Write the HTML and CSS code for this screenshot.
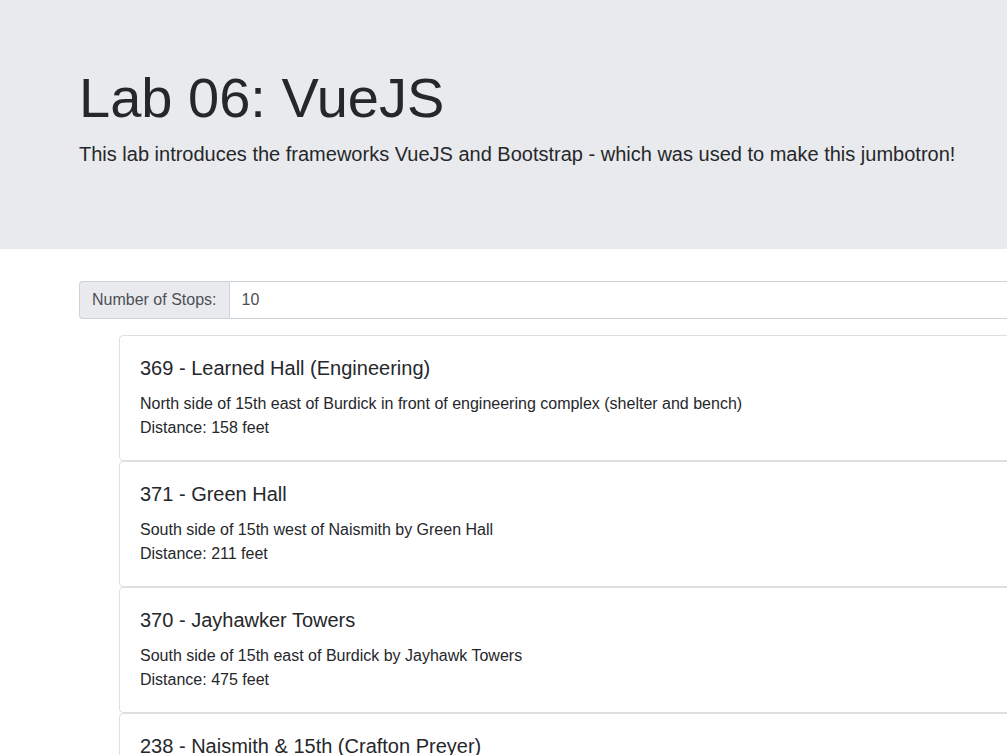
FILE: index.html
```html
<!DOCTYPE html>
<html lang="en">
<head>
<meta charset="utf-8">
<title>Lab 06: VueJS</title>
<link rel="stylesheet" href="styles.css">
</head>
<body>
<header class="jumbotron">
  <h1 class="display">Lab 06: VueJS</h1>
  <p class="lead">This lab introduces the frameworks VueJS and Bootstrap - which was used to make this jumbotron!</p>
</header>
<main class="content">
  <div class="input-group">
    <label class="input-label" for="stops">Number of Stops:</label>
    <input class="input-field" id="stops" type="text" value="10">
  </div>
  <ul class="stops">
    <li class="card">
      <h5 class="card-title">369 - Learned Hall (Engineering)</h5>
      <p class="card-text">North side of 15th east of Burdick in front of engineering complex (shelter and bench)<br>Distance: 158 feet</p>
    </li>
    <li class="card">
      <h5 class="card-title">371 - Green Hall</h5>
      <p class="card-text">South side of 15th west of Naismith by Green Hall<br>Distance: 211 feet</p>
    </li>
    <li class="card">
      <h5 class="card-title">370 - Jayhawker Towers</h5>
      <p class="card-text">South side of 15th east of Burdick by Jayhawk Towers<br>Distance: 475 feet</p>
    </li>
    <li class="card">
      <h5 class="card-title">238 - Naismith &amp; 15th (Crafton Preyer)</h5>
    </li>
  </ul>
</main>
</body>
</html>
```
FILE: styles.css
```css
* {
  box-sizing: border-box;
}

html {
  overflow-x: hidden;
  scrollbar-width: none;
}

body {
  margin: 0;
  background: #fff;
  color: #26272b;
  font-family: "Liberation Sans", Arial, sans-serif;
  font-size: 16px;
  line-height: 24px;
}

.jumbotron {
  margin-bottom: 32px;
  padding: 64px 0 64px 79px;
  background: #e9eaed;
}

.display {
  margin: 0 0 8px;
  font-size: 56px;
  font-weight: 400;
  line-height: 67px;
}

.lead {
  margin: 0 0 16px;
  font-size: 20px;
  line-height: 30px;
}

.content {
  margin-right: -16px;
  padding-left: 79px;
}

.input-group {
  display: flex;
  margin-bottom: 16px;
}

.input-label {
  padding: 6px 12px;
  border: 1px solid #cdd2da;
  border-right: 0;
  border-radius: 4px 0 0 4px;
  background: #e9eaed;
  color: #4d5057;
}

.input-field {
  flex: 1;
  min-width: 0;
  padding: 6px 12px;
  border: 1px solid #cdd2da;
  border-radius: 0 4px 4px 0;
  background: #fff;
  color: #4d5057;
  font: inherit;
}

.stops {
  margin: 0;
  padding-left: 40px;
  list-style: none;
}

.card {
  padding: 20px;
  border: 1px solid #dfdfdf;
  border-radius: 4px;
}

.card-title {
  margin: 0 0 12px;
  font-size: 20px;
  font-weight: 400;
  line-height: 24px;
}

.card-text {
  margin: 0;
}
```
